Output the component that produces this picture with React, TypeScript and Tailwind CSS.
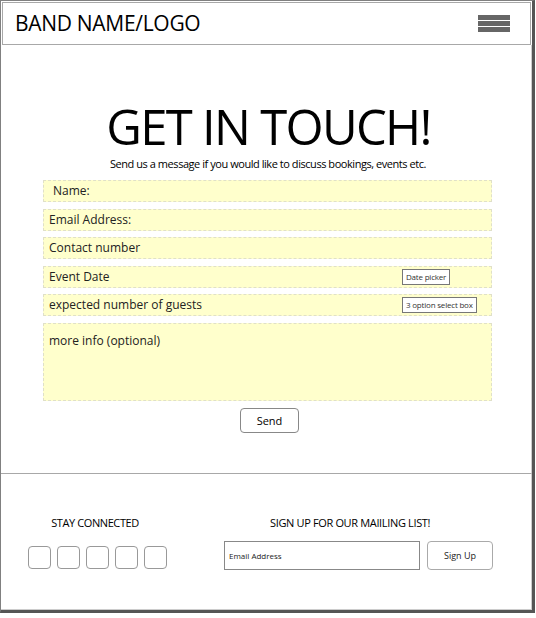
import React from "react";

const font = { fontFamily: '"Open Sans", "Noto Sans", sans-serif' };

function Field({ label, extra, pl = "pl-[5px]" }: { label: string; extra?: string; pl?: string }) {
  return (
    <div className={`h-[22px] w-full bg-[#ffffcc] border border-dashed border-[#e0e0c8] flex items-center ${pl}`}>
      <span className="flex-1 text-[12px] text-[#222] leading-none">{label}</span>
      {extra && (
        <div className="w-[89px] flex">
          <span className="border border-[#777] bg-white text-[8px] leading-none px-[3px] py-[3px] text-[#333] tracking-[-0.2px]">
            {extra}
          </span>
        </div>
      )}
    </div>
  );
}

export default function App() {
  return (
    <div className="w-[536px] h-[618px] bg-white" style={font}>
      <div className="w-[535px] h-[613px] border-l border-t border-[#808080] border-r-[3px] border-b-[3px] border-r-[#555] border-b-[#555] flex flex-col">
        <div className="mx-[1px] mt-[1px] h-[43px] border border-[#a8a8a8] flex items-center justify-between pl-[12px] pr-[20px]">
          <span className="text-[21px] text-black leading-none tracking-[-0.3px]">BAND NAME/LOGO</span>
          <div className="flex flex-col gap-[1px] w-[32px]">
            <div className="h-[5px] bg-[#666]" />
            <div className="h-[5px] bg-[#666]" />
            <div className="h-[5px] bg-[#666]" />
          </div>
        </div>
        <div className="flex-1 flex flex-col items-center border-r border-[#ccc]">
          <h1 className="mt-[51px] text-[49px] leading-[60px] text-black tracking-[-1.7px] ml-[5px]">GET IN TOUCH!</h1>
          <p className="mt-[2px] text-[11px] leading-none text-black tracking-[-0.45px] ml-[4px]">
            Send us a message if you would like to discuss bookings, events etc.
          </p>
          <div className="mt-[11px] w-[449px] ml-[3px] flex flex-col gap-[6.6px]">
            <Field label="Name:" pl="pl-[9px]" />
            <Field label="Email Address:" />
            <Field label="Contact number" />
            <Field label="Event Date" extra="Date picker" />
            <Field label="expected number of guests" extra="3 option select box" />
            <div className="h-[78px] w-full bg-[#ffffcc] border border-dashed border-[#e0e0c8] pl-[5px] pt-[3px]">
              <span className="text-[12px] text-[#222] leading-none">more info (optional)</span>
            </div>
          </div>
          <button className="mt-[7px] ml-[7px] w-[59px] h-[25px] border border-[#888] rounded-[4px] bg-white text-[11px] text-black leading-none">
            Send
          </button>
        </div>
        <div className="h-[137px] border-t border-[#a8a8a8] border-b border-b-[#ccc] border-r border-r-[#ccc] flex items-start pt-[43px]">
          <div className="w-[190px] flex flex-col items-center">
            <span className="text-[11px] leading-none text-black tracking-[-0.4px] ml-[-2px]">STAY CONNECTED</span>
            <div className="mt-[18px] flex gap-[6px] ml-[2px]">
              {[0, 1, 2, 3, 4].map((i) => (
                <div key={i} className="w-[23px] h-[23px] border border-[#999] rounded-[4px]" />
              ))}
            </div>
          </div>
          <div className="ml-[33px] flex flex-col">
            <span className="ml-[46px] text-[11px] leading-none text-black tracking-[-0.35px]">SIGN UP FOR OUR MAIILING LIST!</span>
            <div className="mt-[13px] flex gap-[7px]">
              <div className="w-[196px] h-[29px] border border-[#888] flex items-center pl-[4px]">
                <span className="text-[8px] leading-none text-[#222]">Email Address</span>
              </div>
              <div className="w-[66px] h-[29px] border border-[#aaa] rounded-[4px] flex items-center justify-center">
                <span className="text-[9px] leading-none text-[#222]">Sign Up</span>
              </div>
            </div>
          </div>
        </div>
      </div>
    </div>
  );
}
